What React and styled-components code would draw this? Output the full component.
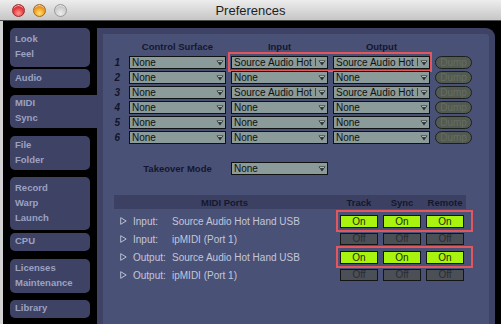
import React from 'react';
import styled, { createGlobalStyle, css } from 'styled-components';

const GlobalStyle = createGlobalStyle`
  html, body {
    margin: 0;
    padding: 0;
    background: #000;
  }
  body {
    font-family: "Liberation Sans", Arial, sans-serif;
  }
`;

const Window = styled.div`
  width: 501px;
  height: 324px;
  overflow: hidden;
  display: flex;
  flex-direction: column;
  background: #000;
`;

const TitleBar = styled.div`
  flex: none;
  height: 20px;
  display: grid;
  grid-template-columns: 1fr auto 1fr;
  align-items: center;
  background: linear-gradient(#ededed, #c6c6c6);
  border-bottom: 1px solid #4c4c4c;
`;

const Lights = styled.div`
  display: flex;
  gap: 8px;
  padding-left: 12px;
`;

const Light = styled.span`
  width: 13px;
  height: 13px;
  border-radius: 50%;
  box-sizing: border-box;
  border: 1px solid ${p => p.$edge};
  background: radial-gradient(circle at 50% 75%, ${p => p.$glow} 0%, ${p => p.$color} 55%, ${p => p.$dark} 100%);
  box-shadow: inset 0 2px 1px -1px rgba(255, 255, 255, 0.8);
`;

const Title = styled.div`
  font-size: 13px;
  color: #1e1e1e;
`;

const Body = styled.div`
  flex: 1;
  display: flex;
  min-height: 0;
  border-left: 3px solid #d2d2d2;
`;

const Sidebar = styled.div`
  flex: none;
  width: 94px;
  padding-left: 7px;
  box-sizing: border-box;
  display: flex;
  flex-direction: column;
`;

const Tab = styled.div`
  width: ${p => (p.$active ? 87 : 80)}px;
  height: ${p => p.$h}px;
  margin-top: ${p => p.$gap}px;
  box-sizing: border-box;
  padding: 0 0 3px 5px;
  background: #3e4365;
  border-radius: ${p => (p.$active ? '5px 0 0 5px' : '5px')};
  display: flex;
  flex-direction: column;
  justify-content: center;
  font-size: 9.5px;
  font-weight: bold;
  line-height: 15px;
  color: #9ca1c1;
`;

const Panel = styled.div`
  flex: 1;
  margin: 7px 6px 0 0;
  background: #4a5177;
  border: 6px solid #3e4365;
  border-bottom: none;
  border-radius: 0 9px 0 0;
  padding: 7px 0 0 3px;
`;

const SurfaceGrid = styled.div`
  display: grid;
  grid-template-columns: 18px 97px 97px 97px 37px;
  grid-auto-rows: 13px;
  column-gap: 5px;
  row-gap: 2px;
  margin-top: ${p => p.$top || 0}px;
`;

const ColHead = styled.div`
  height: 14px;
  font-size: 9.5px;
  font-weight: bold;
  color: #14172c;
  text-align: center;
  line-height: 12px;
`;

const RowNum = styled.div`
  font-size: 10px;
  font-weight: bold;
  font-style: italic;
  color: #12152a;
  text-align: right;
  padding-right: 4px;
  line-height: 13px;
`;

const Select = styled.div`
  position: relative;
  height: 13px;
  box-sizing: border-box;
  border: 1px solid #101212;
  background: #8a9b99;
  padding: 0 4px 0 2px;
  font-size: 10px;
  line-height: 11px;
  color: #101010;
  white-space: nowrap;
  overflow: hidden;
`;

const Arrow = styled.span`
  position: absolute;
  right: 0;
  top: 0;
  width: 11px;
  height: 11px;
  background: #8a9b99;
  display: flex;
  align-items: center;
  justify-content: center;
`;

const Dump = styled.div`
  height: 13px;
  box-sizing: border-box;
  border: 1px solid #1c201c;
  border-radius: 7px;
  background: #525a51;
  color: #656e63;
  font-size: 10px;
  line-height: 11px;
  text-align: center;
  overflow: hidden;
`;

const marked = css`
  position: relative;

  &::after {
    content: '';
    position: absolute;
    top: ${p => p.$t}px;
    bottom: ${p => p.$b}px;
    left: ${p => p.$l}px;
    right: ${p => p.$r}px;
    border: 2px solid #e2565d;
    pointer-events: none;
  }
`;

const MarkedPair = styled.div`
  grid-column: 3 / span 2;
  display: flex;
  gap: 5px;
  ${marked}
`;

const PairSelect = styled(Select)`
  width: 97px;
  flex: none;
`;

const TakeoverLabel = styled.div`
  font-size: 9.5px;
  font-weight: bold;
  color: #14172c;
  text-align: center;
  line-height: 13px;
`;

const Ports = styled.div`
  width: 352px;
  margin: 20px 0 0 8px;
`;

const PortsHead = styled.div`
  height: 14px;
  display: grid;
  grid-template-columns: 1fr 38px 38px 38px;
  column-gap: 5px;
  padding-right: 2px;
  background: #3c4163;
  align-items: center;
  margin-bottom: 3px;
`;

const HeadText = styled.div`
  font-size: 9.5px;
  font-weight: bold;
  color: #15182d;
  text-align: center;
`;

const PortRow = styled.div`
  height: 18px;
  display: grid;
  grid-template-columns: 1fr auto;
  column-gap: 5px;
  padding-right: 2px;
  align-items: center;
`;

const PortName = styled.div`
  display: flex;
  align-items: center;
  padding-left: 6px;
  font-size: 10px;
  color: #c2c7da;
  white-space: nowrap;
`;

const PortKind = styled.span`
  width: 39px;
  margin-left: 6px;
`;

const ToggleGroup = styled.div`
  display: flex;
  gap: 5px;
  ${p => p.$mark && marked}
`;

const Toggle = styled.div`
  width: 38px;
  height: ${p => (p.$on ? 13 : 12)}px;
  box-sizing: border-box;
  border: 1px solid #151515;
  background: ${p => (p.$on ? '#a8f40e' : '#4b4f56')};
  color: ${p => (p.$on ? '#1a2a04' : '#2a2d32')};
  font-size: 10px;
  line-height: ${p => (p.$on ? 11 : 10)}px;
  text-align: center;
`;

const DownArrow = () => (
  <svg width="8" height="6" viewBox="0 0 8 6">
    <polygon points="0.5,0.5 7.5,0.5 4,5.5" fill="#2b3030" />
    <line x1="2" y1="1.6" x2="6" y2="1.6" stroke="#c9d2d0" strokeWidth="0.9" />
  </svg>
);

const PlayArrow = () => (
  <svg width="7" height="8" viewBox="0 0 7 8">
    <polygon points="0.7,0.7 6.2,4 0.7,7.3" fill="none" stroke="#b9bed4" strokeWidth="1" />
  </svg>
);

const Dropdown = ({ value, as: Comp = Select }) => (
  <Comp>
    {value}
    <Arrow><DownArrow /></Arrow>
  </Comp>
);

const tabs = [
  { lines: ['Look', 'Feel'], h: 39, gap: 7 },
  { lines: ['Audio'], h: 19, gap: 2 },
  { lines: ['MIDI', 'Sync'], h: 33, gap: 7, active: true },
  { lines: ['File', 'Folder'], h: 34, gap: 8 },
  { lines: ['Record', 'Warp', 'Launch'], h: 53, gap: 7 },
  { lines: ['CPU'], h: 18, gap: 3 },
  { lines: ['Licenses', 'Maintenance'], h: 34, gap: 8 },
  { lines: ['Library'], h: 18, gap: 7 },
];

const surfaces = [
  { input: 'Source Audio Hot Hand USB', output: 'Source Audio Hot Hand USB' },
  { input: 'None', output: 'None' },
  { input: 'Source Audio Hot Hand USB', output: 'Source Audio Hot Hand USB' },
  { input: 'None', output: 'None' },
  { input: 'None', output: 'None' },
  { input: 'None', output: 'None' },
];

const ports = [
  { kind: 'Input:', name: 'Source Audio Hot Hand USB', on: true },
  { kind: 'Input:', name: 'ipMIDI (Port 1)', on: false },
  { kind: 'Output:', name: 'Source Audio Hot Hand USB', on: true },
  { kind: 'Output:', name: 'ipMIDI (Port 1)', on: false },
];

const App = () => (
  <Window>
    <GlobalStyle />
    <TitleBar>
      <Lights>
        <Light $color="#e8343a" $dark="#8e0d12" $glow="#ff9a8f" $edge="#9c2a2a" />
        <Light $color="#f29a1c" $dark="#a55a06" $glow="#ffe27a" $edge="#a8681a" />
        <Light $color="#cfcfcf" $dark="#9c9c9c" $glow="#ededed" $edge="#9a9a9a" />
      </Lights>
      <Title>Preferences</Title>
      <div />
    </TitleBar>
    <Body>
      <Sidebar>
        {tabs.map(t => (
          <Tab key={t.lines[0]} $h={t.h} $gap={t.gap} $active={t.active}>
            {t.lines.map(l => <div key={l}>{l}</div>)}
          </Tab>
        ))}
      </Sidebar>
      <Panel>
        <SurfaceGrid>
          <ColHead />
          <ColHead>Control Surface</ColHead>
          <ColHead>Input</ColHead>
          <ColHead>Output</ColHead>
          <ColHead />
          {surfaces.map((s, i) => (
            <React.Fragment key={i}>
              <RowNum>{i + 1}</RowNum>
              <Dropdown value="None" />
              {i === 0 ? (
                <MarkedPair $t={-4} $b={-3} $l={-3} $r={-2}>
                  <Dropdown value={s.input} as={PairSelect} />
                  <Dropdown value={s.output} as={PairSelect} />
                </MarkedPair>
              ) : (
                <>
                  <Dropdown value={s.input} />
                  <Dropdown value={s.output} />
                </>
              )}
              <Dump>Dump</Dump>
            </React.Fragment>
          ))}
        </SurfaceGrid>
        <SurfaceGrid $top={18}>
          <div />
          <TakeoverLabel>Takeover Mode</TakeoverLabel>
          <Dropdown value="None" />
        </SurfaceGrid>
        <Ports>
          <PortsHead>
            <HeadText>MIDI Ports</HeadText>
            <HeadText>Track</HeadText>
            <HeadText>Sync</HeadText>
            <HeadText>Remote</HeadText>
          </PortsHead>
          {ports.map((p, i) => (
            <PortRow key={i}>
              <PortName>
                <PlayArrow />
                <PortKind>{p.kind}</PortKind>
                {p.name}
              </PortName>
              <ToggleGroup $mark={p.on} $t={-5} $b={-4} $l={-4} $r={-9}>
                {['Track', 'Sync', 'Remote'].map(c => (
                  <Toggle key={c} $on={p.on}>{p.on ? 'On' : 'Off'}</Toggle>
                ))}
              </ToggleGroup>
            </PortRow>
          ))}
        </Ports>
      </Panel>
    </Body>
  </Window>
);

export default App;
